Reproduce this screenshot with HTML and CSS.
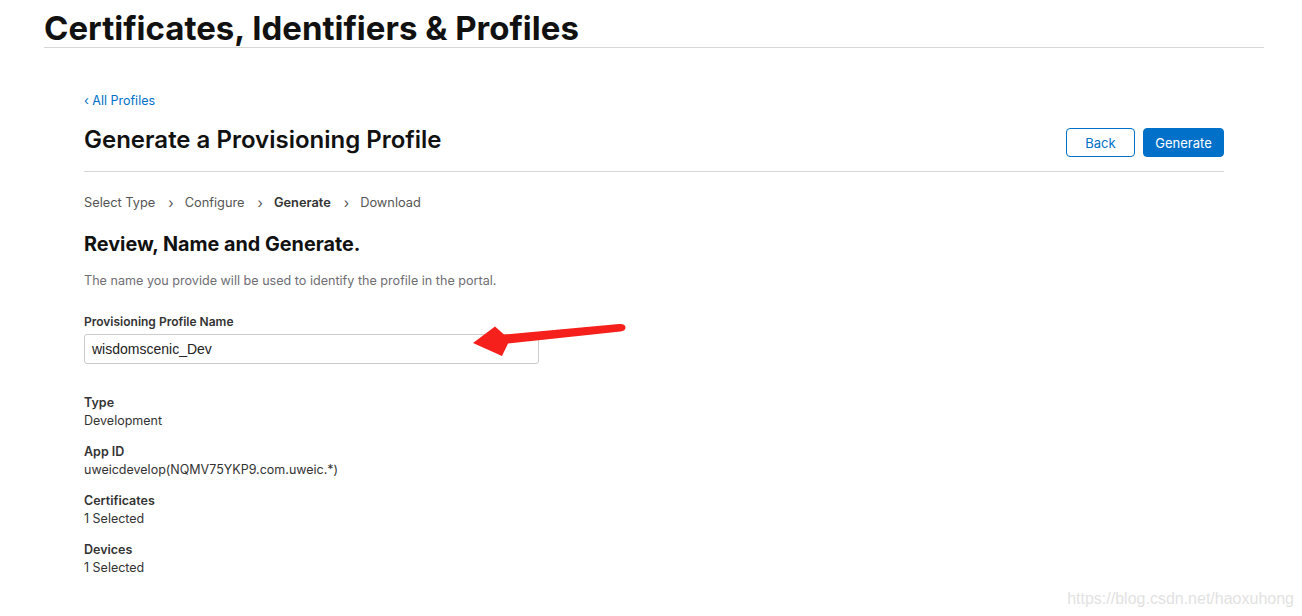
FILE: index.html
```html
<!DOCTYPE html>
<html>
<head>
<meta charset="utf-8">
<link rel="stylesheet" href="styles.css">
</head>
<body>
<header class="top">
  <h1 class="top-title">Certificates, Identifiers &amp; Profiles</h1>
</header>
<main class="main">
  <a class="back-link" href="#">‹ All Profiles</a>
  <div class="page-head">
    <h2 class="page-title">Generate a Provisioning Profile</h2>
    <div class="actions">
      <button class="btn btn-outline">Back</button>
      <button class="btn btn-primary">Generate</button>
    </div>
  </div>
  <nav class="steps">
    <span class="step">Select Type</span>
    <span class="chev">›</span>
    <span class="step">Configure</span>
    <span class="chev">›</span>
    <span class="step current">Generate</span>
    <span class="chev">›</span>
    <span class="step">Download</span>
  </nav>
  <h3 class="section-title">Review, Name and Generate.</h3>
  <p class="desc">The name you provide will be used to identify the profile in the portal.</p>
  <div class="field">
    <label class="field-label">Provisioning Profile Name</label>
    <div class="input">wisdomscenic_Dev</div>
    <svg class="arrow" width="170" height="50" viewBox="0 0 170 50">
      <path d="M7 29 L29 12.5 L38 20.5 L153 10 C157 9.5 159.5 11 159.5 13.5 C159.5 16 157.5 17.2 154.5 17.5 L42 29.5 L36 42 Z" fill="#f5201c"/>
    </svg>
  </div>
  <dl class="info">
    <div class="info-row"><dt>Type</dt><dd>Development</dd></div>
    <div class="info-row"><dt>App ID</dt><dd>uweicdevelop(NQMV75YKP9.com.uweic.*)</dd></div>
    <div class="info-row"><dt>Certificates</dt><dd>1 Selected</dd></div>
    <div class="info-row"><dt>Devices</dt><dd>1 Selected</dd></div>
  </dl>
</main>
<div class="watermark">https://blog.csdn.net/haoxuhong</div>
</body>
</html>
```
FILE: styles.css
```css
* { box-sizing: border-box; }
html, body { margin: 0; padding: 0; background: #fff; }
body {
  width: 1302px;
  height: 616px;
  overflow: hidden;
  position: relative;
  font-family: Inter, "Noto Sans", "Liberation Sans", sans-serif;
  color: #1d1d1f;
}
.top {
  margin: 0 38px 0 44px;
  border-bottom: 1px solid #d6d6d6;
  height: 48px;
}
.top-title {
  margin: 0;
  padding-top: 9px;
  font-size: 33px;
  line-height: 38px;
  font-weight: 700;
  letter-spacing: 0;
  color: #111;
}
.main {
  margin: 0 78px 0 84px;
  position: relative;
}
.back-link {
  display: block;
  margin-top: 45px;
  font-size: 12.5px;
  line-height: 16px;
  color: #0070c9;
  text-decoration: none;
}
.page-head {
  display: flex;
  justify-content: space-between;
  align-items: flex-start;
  margin-top: 11px;
  height: 52px;
  border-bottom: 1px solid #d6d6d6;
}
.page-title {
  margin: 7px 0 0;
  font-size: 24px;
  line-height: 26px;
  font-weight: 600;
  color: #111;
}
.actions {
  display: flex;
  gap: 8px;
  margin-top: 8px;
}
.btn {
  height: 29px;
  border-radius: 4px;
  font-family: inherit;
  font-size: 13px;
  padding: 0;
  cursor: pointer;
}
.btn-outline {
  width: 69px;
  background: #fff;
  color: #0070c9;
  border: 1px solid #0070c9;
}
.btn-primary {
  width: 81px;
  background: #0070c9;
  color: #fff;
  border: 1px solid #0070c9;
}
.steps {
  display: flex;
  align-items: center;
  margin-top: 23px;
  font-size: 12.8px;
  line-height: 16px;
  color: #555;
}
.chev {
  margin: 0 11px 0 13px;
  font-size: 14px;
  color: #555;
}
.step.current { font-weight: 600; color: #333; }
.section-title {
  margin: 21px 0 0;
  font-size: 19.8px;
  line-height: 24px;
  font-weight: 700;
  color: #111;
}
.desc {
  margin: 17px 0 0;
  font-size: 12.6px;
  line-height: 16px;
  color: #6e6e73;
}
.field {
  position: relative;
  margin-top: 25px;
}
.field-label {
  display: block;
  font-size: 12px;
  line-height: 16px;
  font-weight: 600;
  color: #333;
}
.input {
  margin-top: 4px;
  width: 455px;
  height: 30px;
  border: 1px solid #ccc;
  border-radius: 3px;
  padding: 0 7px;
  font-family: "Liberation Sans", Arial, sans-serif;
  font-size: 14px;
  line-height: 28px;
  color: #222;
}
.arrow {
  position: absolute;
  left: 382px;
  top: 0;
}
.info {
  margin: 30px 0 0;
}
.info-row {
  margin-bottom: 13px;
}
.info dt {
  font-size: 12.5px;
  line-height: 18px;
  font-weight: 600;
  color: #333;
}
.info dd {
  margin: 0;
  font-size: 12.5px;
  line-height: 18px;
  color: #333;
}
.watermark {
  position: absolute;
  right: 8px;
  bottom: 8px;
  font-family: "Liberation Sans", sans-serif;
  font-size: 16px;
  color: #e2e2e2;
}
```
